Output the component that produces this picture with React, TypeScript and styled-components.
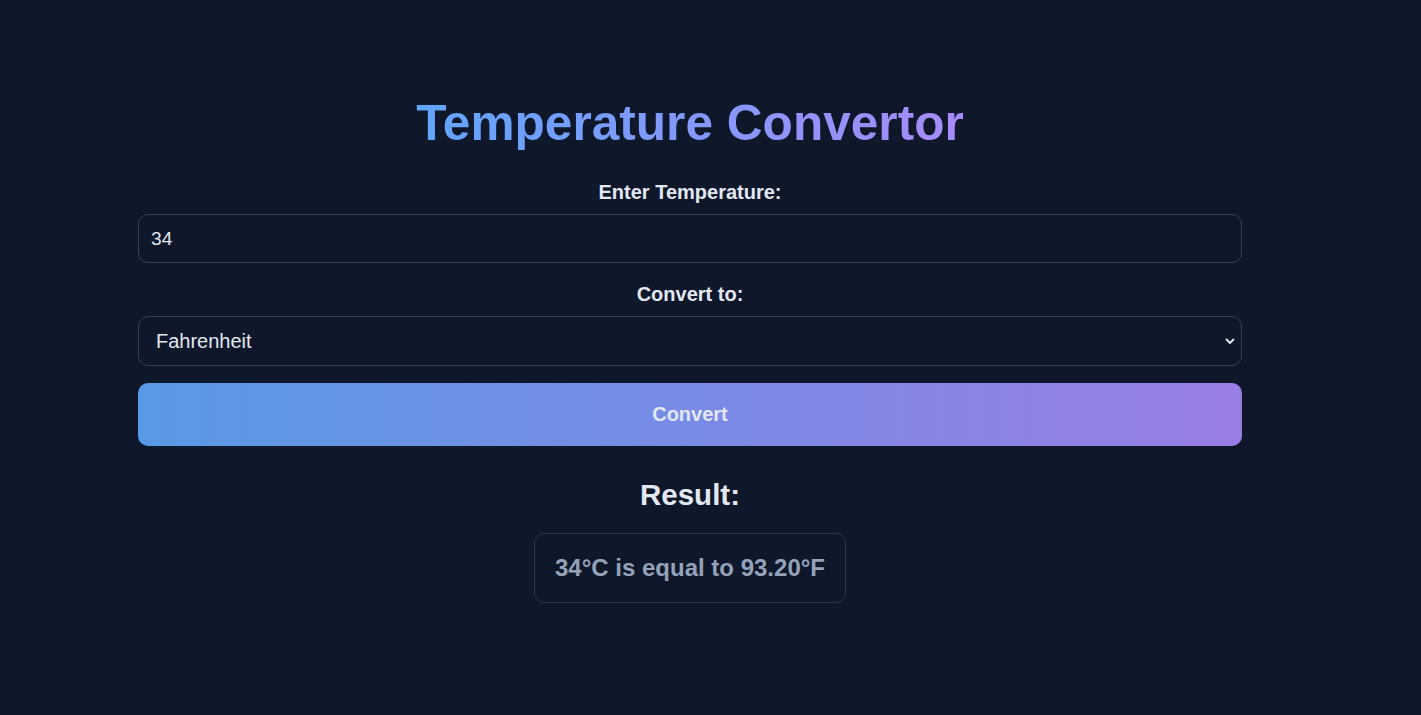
import React, { useState } from "react";
import styled, { createGlobalStyle } from "styled-components";

const GlobalStyle = createGlobalStyle`
  html, body {
    margin: 0;
    padding: 0;
    background: #0f172a;
    color: #e2e8f0;
    font-family: "Liberation Sans", Arial, sans-serif;
  }
  * { box-sizing: border-box; }
`;

const Page = styled.div`
  min-height: 715px;
  display: flex;
  justify-content: center;
  padding: 95px 41px 0 0;
`;

const Card = styled.main`
  width: 1104px;
  display: flex;
  flex-direction: column;
  align-items: center;
`;

const Title = styled.h1`
  margin: 0 0 29px;
  font-size: 49.6px;
  font-weight: 700;
  line-height: 57px;
  background: linear-gradient(90deg, #60a5fa, #a78bfa);
  -webkit-background-clip: text;
  background-clip: text;
  color: transparent;
`;

const Label = styled.label<{ $top?: number }>`
  display: block;
  margin: ${(p) => p.$top ?? 0}px 0 10px;
  font-size: 20px;
  font-weight: 700;
  line-height: 23px;
  color: #e2e8f0;
`;

const fieldBase = `
  width: 100%;
  background: #0f172a;
  border: 1px solid #334155;
  border-radius: 10px;
  color: #e2e8f0;
  font-family: "Liberation Sans", Arial, sans-serif;
  outline: none;
`;

const Input = styled.input`
  ${fieldBase}
  height: 49px;
  padding: 0 12px;
  font-size: 19.2px;
`;

const SelectWrap = styled.div`
  position: relative;
  width: 100%;
`;

const Select = styled.select`
  ${fieldBase}
  appearance: none;
  -webkit-appearance: none;
  height: 50px;
  padding: 0 40px 0 17px;
  font-size: 20px;
`;

const Chevron = styled.svg`
  position: absolute;
  right: 7px;
  top: 20px;
  width: 10px;
  height: 10px;
  pointer-events: none;
`;

const Button = styled.button`
  width: 100%;
  height: 63px;
  margin-top: 17px;
  border: none;
  border-radius: 10px;
  background: linear-gradient(90deg, #5899e5, #9a7de4);
  color: #e4e6f6;
  font-family: "Liberation Sans", Arial, sans-serif;
  font-size: 20px;
  font-weight: 700;
  cursor: pointer;
`;

const ResultTitle = styled.h2`
  margin: 32px 0 22px;
  font-size: 29.5px;
  font-weight: 700;
  line-height: 33px;
  color: #e2e8f0;
`;

const ResultBox = styled.div`
  padding: 20px;
  border: 1px solid #2b3648;
  border-radius: 10px;
  font-size: 24px;
  font-weight: 700;
  line-height: 28px;
  color: #94a3b8;
`;

export default function App() {
  const [value, setValue] = useState("34");
  const [unit, setUnit] = useState("fahrenheit");

  return (
    <>
      <GlobalStyle />
      <Page>
        <Card>
          <Title>Temperature Convertor</Title>
          <Label htmlFor="temp">Enter Temperature:</Label>
          <Input id="temp" value={value} onChange={(e) => setValue(e.target.value)} />
          <Label htmlFor="unit" $top={20}>Convert to:</Label>
          <SelectWrap>
            <Select id="unit" value={unit} onChange={(e) => setUnit(e.target.value)}>
              <option value="fahrenheit">Fahrenheit</option>
              <option value="celsius">Celsius</option>
              <option value="kelvin">Kelvin</option>
            </Select>
            <Chevron viewBox="0 0 10 10">
              <path d="M1.5 3.5 L5 7 L8.5 3.5" fill="none" stroke="#e2e8f0" strokeWidth="1.8" strokeLinecap="round" strokeLinejoin="round" />
            </Chevron>
          </SelectWrap>
          <Button type="button">Convert</Button>
          <ResultTitle>Result:</ResultTitle>
          <ResultBox>34°C is equal to 93.20°F</ResultBox>
        </Card>
      </Page>
    </>
  );
}
